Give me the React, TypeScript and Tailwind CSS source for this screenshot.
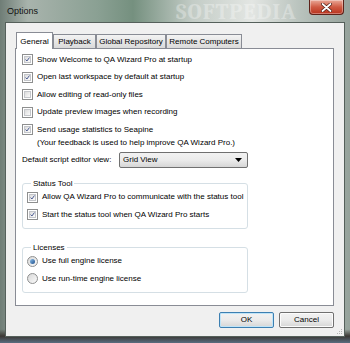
import type { ReactNode } from "react";

const font = { fontFamily: '"Liberation Sans", Arial, sans-serif' };

function CheckBox({ checked }: { checked?: boolean }) {
  return (
    <span className="flex h-[11px] w-[11px] shrink-0 items-center justify-center border border-[#8e8f8f] bg-white p-px">
      <span className="flex h-full w-full items-center justify-center border border-[#c4c6ca] bg-gradient-to-br from-[#dcdcdc] to-[#fbfbfb]">
        {checked && (
          <svg width="7" height="7" viewBox="0 0 7 7">
            <path d="M0.8 3.6 L2.7 5.6 L6.2 0.8" fill="none" stroke="#3d4f8a" strokeWidth="1.3" />
          </svg>
        )}
      </span>
    </span>
  );
}

function Radio({ checked }: { checked?: boolean }) {
  return (
    <span className="flex h-[11px] w-[11px] shrink-0 items-center justify-center rounded-full border border-[#8e8f8f] bg-gradient-to-br from-[#d8d8d8] to-[#fafafa]">
      {checked && (
        <span className="h-[5px] w-[5px] rounded-full bg-gradient-to-br from-[#8fc1ea] to-[#1d4f8c]" />
      )}
    </span>
  );
}

function CheckRow({ checked, children }: { checked?: boolean; children: ReactNode }) {
  return (
    <div className="flex h-[17.5px] items-center gap-[4px] whitespace-nowrap">
      <CheckBox checked={checked} />
      <span>{children}</span>
    </div>
  );
}

function RadioRow({ checked, children }: { checked?: boolean; children: ReactNode }) {
  return (
    <div className="flex h-[17.5px] items-center gap-[4px] whitespace-nowrap">
      <Radio checked={checked} />
      <span>{children}</span>
    </div>
  );
}

function Group({ title, children }: { title: string; children: ReactNode }) {
  return (
    <fieldset className="w-[226px] rounded-[3px] border border-[#d5dfe5] pb-[4px] pl-[4px]">
      <legend className="ml-[4px] px-[2px] leading-[11px]">{title}</legend>
      {children}
    </fieldset>
  );
}

const tabIdle =
  "flex h-[14px] shrink-0 items-center justify-center border border-b-0 border-[#898c95] bg-gradient-to-b from-[#f3f3f3] to-[#dadada] whitespace-nowrap";

const btn =
  "flex h-[16px] w-[55px] items-center justify-center rounded-[2px] border bg-gradient-to-b from-[#f2f2f2] via-[#ebebeb] to-[#d6d6d6] text-[8px]";

export default function App() {
  return (
    <div
      style={font}
      className="relative flex h-[343px] w-[350px] flex-col overflow-hidden bg-[linear-gradient(to_bottom,rgba(0,0,0,0)_96%,#3b3734_98%,#5a6d80_100%),linear-gradient(to_right,#6f7d76_0%,#a8b3ac_8%,#8aa093_28%,#75907f_38%,#c3ccc6_55%,#e3e6e3_72%,#b8c2bc_86%,#95a29b_100%)] text-[8px] text-black"
    >
      {/* watermark over the title bar */}
      <span className="pointer-events-none absolute left-[176px] top-[1px] font-serif text-[22px] font-bold leading-[22px] tracking-[1px] text-white opacity-30">
        SOFTPEDIA
      </span>

      <div className="relative flex h-[22px] items-start justify-between pl-[7px] pr-[6px]">
        <span className="mt-[5px] text-[9px] text-[#111]">Options</span>
        <div className="flex h-[15px] w-[35px] items-center justify-center rounded-b-[4px] border border-t-0 border-[#5d2219] bg-gradient-to-b from-[#e9a898] via-[#cf5a43] to-[#b8321c] shadow-[inset_0_0_0_1px_rgba(255,255,255,0.35)]">
          <svg width="11" height="9" viewBox="0 0 11 9">
            <path d="M1.5 1 L9.5 8 M9.5 1 L1.5 8" stroke="#4a1a12" strokeWidth="3.2" strokeLinecap="round" />
            <path d="M1.5 1 L9.5 8 M9.5 1 L1.5 8" stroke="#fff" strokeWidth="1.8" strokeLinecap="round" />
          </svg>
        </div>
      </div>

      <div className="mx-[5px] mb-[6px] flex flex-1 flex-col border border-[#55605b] bg-[#f0f0f0] pt-[9px]">
        <div className="ml-[10px] flex items-end">
          <div className="relative z-10 -mb-px flex h-[17px] w-[37px] shrink-0 items-start justify-center border border-b-0 border-[#898c95] bg-white pt-[3px]">
            General
          </div>
          <div className={`${tabIdle} w-[43px]`}>Playback</div>
          <div className={`${tabIdle} w-[70px]`}>Global Repository</div>
          <div className={`${tabIdle} w-[76px]`}>Remote Computers</div>
        </div>

        <div className="ml-[9px] flex h-[258px] w-[319px] flex-col border border-[#898c95] bg-white pl-[6px] pt-[2px]">
          <CheckRow checked>Show Welcome to QA Wizard Pro at startup</CheckRow>
          <CheckRow checked>Open last workspace by default at startup</CheckRow>
          <CheckRow>Allow editing of read-only files</CheckRow>
          <CheckRow>Update preview images when recording</CheckRow>
          <CheckRow checked>Send usage statistics to Seapine</CheckRow>
          <div className="-mt-px flex h-[11px] items-center pl-[15px]">
            (Your feedback is used to help improve QA Wizard Pro.)
          </div>

          <div className="mt-[3px] flex w-[226px] items-center justify-between">
            <span className="w-[90px] shrink-0 overflow-hidden whitespace-nowrap">Default script editor view:</span>
            <div className="flex h-[16px] w-[129px] shrink-0 items-center justify-between rounded-[2px] border border-[#707070] bg-gradient-to-b from-[#f2f2f2] via-[#ebebeb] to-[#d6d6d6] pl-[3px] pr-[5px]">
              <span>Grid View</span>
              <svg width="7" height="4" viewBox="0 0 7 4">
                <path d="M0 0 H7 L3.5 4 Z" fill="#000" />
              </svg>
            </div>
          </div>

          <div className="mt-[10px]">
            <Group title="Status Tool">
              <CheckRow checked>Allow QA Wizard Pro to communicate with the status tool</CheckRow>
              <CheckRow checked>Start the status tool when QA Wizard Pro starts</CheckRow>
            </Group>
          </div>

          <div className="mt-[13px]">
            <Group title="Licenses">
              <RadioRow checked>Use full engine license</RadioRow>
              <RadioRow>Use run-time engine license</RadioRow>
            </Group>
          </div>
        </div>

        <div className="mr-[10px] mt-[6px] flex justify-end gap-[5px]">
          <button className={`${btn} border-[#3c7fb1] shadow-[inset_0_0_0_1px_#bfe4f8]`}>OK</button>
          <button className={`${btn} border-[#707070] shadow-[inset_0_0_0_1px_#fcfcfc]`}>Cancel</button>
        </div>

        <div className="mt-auto flex justify-end pb-px pr-px">
          <svg width="6" height="6" viewBox="0 0 6 6">
            <rect x="4" y="0" width="1" height="1" fill="#b5b5b5" />
            <rect x="2" y="2" width="1" height="1" fill="#b5b5b5" />
            <rect x="4" y="2" width="1" height="1" fill="#b5b5b5" />
            <rect x="0" y="4" width="1" height="1" fill="#b5b5b5" />
            <rect x="2" y="4" width="1" height="1" fill="#b5b5b5" />
            <rect x="4" y="4" width="1" height="1" fill="#b5b5b5" />
          </svg>
        </div>
      </div>
    </div>
  );
}
